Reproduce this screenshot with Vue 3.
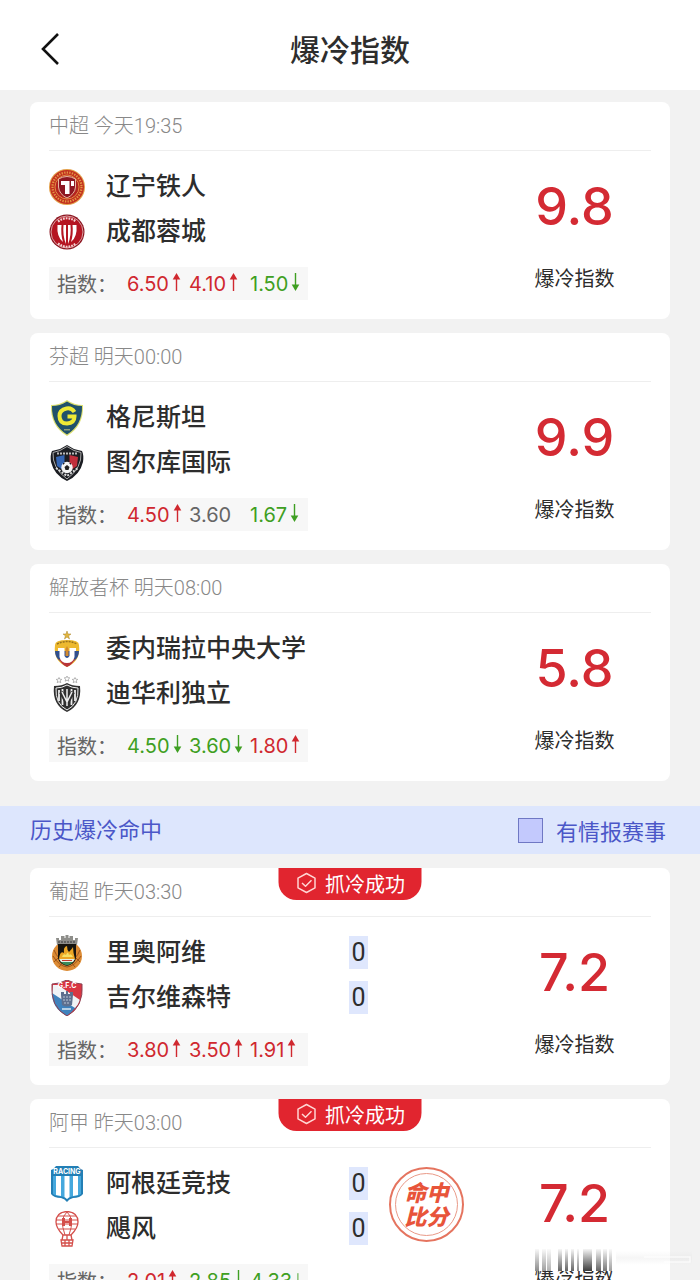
<template>
  <div class="page">
    <!-- Club crests, referenced by id from the match rows -->
    <svg class="crest-defs" aria-hidden="true">
      <symbol id="crest-liaoning" viewBox="0 0 36 36">
        <circle cx="18" cy="18" r="18" fill="#e3a04a" />
        <circle cx="18" cy="18" r="17" fill="#c2301f" />
        <circle cx="18" cy="18" r="14.500" fill="none" stroke="#e39a45" stroke-width="2.200" stroke-dasharray="1.300 1.300" />
        <circle cx="18" cy="18" r="12" fill="#b3231f" stroke="#e08a42" />
        <path d="M9.500 10 Q18 5 26.500 10 V18 Q26 25 18 29 Q10 25 9.500 18 Z" fill="#8d1722" stroke="#e6b9a4" stroke-width="1" />
        <path d="M12 12 H20.500 V25 H16 V16 H12 Z" fill="#fff" />
        <path d="M22 12 H25 V17 H22 Z" fill="#fff" />
      </symbol>
      <symbol id="crest-chengdu" viewBox="0 0 36 36">
        <circle cx="18" cy="18" r="17.500" fill="#8c1520" />
        <circle cx="18" cy="18" r="16" fill="#b51522" stroke="#d9a3a4" stroke-width="1" />
        <path d="M8.500 11 H12.500 Q11.500 20 14 28 Q7.500 23 8.500 11 Z M23.500 11 H27.500 Q28.500 23 22 28 Q24.500 20 23.500 11 Z" fill="#fff" />
        <path d="M14.500 11 H17 V30 Q13.500 22 14.500 11 Z M19 11 H21.500 Q22.500 22 19 30 Z" fill="#fff" />
        <path d="M9 7.500 Q18 1 27 7.500 M9 29.500 Q18 36 27 29.500" fill="none" stroke="#f3d3d3" stroke-width="2.200" stroke-dasharray="1.800 1" />
      </symbol>
      <symbol id="crest-gnistan" viewBox="0 0 36 36">
        <path d="M18 0 Q25 5 34 5 Q35 26 18 36 Q1 26 2 5 Q11 5 18 0 Z" fill="#dde070" />
        <path d="M18 1.500 Q25 6 33 6 Q33.500 25 18 34.500 Q2.500 25 3 6 Q11 6 18 1.500 Z" fill="#20516a" />
        <path d="M25.500 12 Q22.500 7.500 17.500 8.500 Q10.500 10 10.500 16 Q10.500 23.500 18 23.500 Q25.500 23 25.500 16.500 H18.500" fill="none" stroke="#eee936" stroke-width="4" />
        <rect x="15" y="29" width="6" height="1.500" fill="#8e9b77" />
      </symbol>
      <symbol id="crest-inter-turku" viewBox="0 0 36 36">
        <path d="M18 0 L25 4 L33 6 Q35 10 34 17 Q31 30 18 36 Q5 30 2 17 Q1 10 3 6 L11 4 Z" fill="#1b1d22" />
        <path d="M18 1.500 L25 5.500 L32 7.500 Q33 23 18 34 Q3 23 4 7.500 L11 5.500 Z" fill="none" stroke="#aaa" stroke-width="1" />
        <path d="M7 12 L15.500 10 V26 L8 21 Z" fill="#3566b4" />
        <path d="M29 12 L20.500 10 V26 L28 21 Z" fill="#c12e3b" />
        <path d="M8 8.500 H28" stroke="#bbb" stroke-width="2" stroke-dasharray="2 1" />
        <path d="M7 23 L18 31 L29 23" fill="none" stroke="#ddd" stroke-width="2" stroke-dasharray="2 1.500" />
        <circle cx="18" cy="22.500" r="5.700" fill="#f5f5f5" />
        <path d="M18 20 L20.500 22 L19.500 25 H16.500 L15.500 22 Z M14 18 L16 18 L14 20 Z M22 18 L20 18 L22 20 Z" fill="#222" />
      </symbol>
      <symbol id="crest-ucv" viewBox="0 0 36 36">
        <path d="M18 0 L19 3 L22 3 L19.600 4.800 L20.500 8 L18 6 L15.500 8 L16.400 4.800 L14 3 L17 3 Z" fill="#e2b53c" stroke="#a88325" stroke-width="0.500" />
        <path d="M6 14 Q6 9 18 9 Q30 9 30 14 Q32 30 18 36 Q4 30 6 14 Z" fill="#edb92f" />
        <path d="M6 20 L30 20 Q30 26 25 30 H11 Q6 26 6 20 Z" fill="#304f8e" />
        <path d="M10 28 H26 Q23 34 18 36 Q13 34 10 28 Z" fill="#b83439" />
        <path d="M8 13 Q18 8 28 13" fill="none" stroke="#96721f" stroke-width="1.500" stroke-dasharray="2 1" />
        <path d="M9 17 H15.500 V25 Q18 29 20.500 25 V17 H27 V20 H25.500 V26 Q24 32 18 32 Q12 32 10.500 26 V20 H9 Z" fill="#fff" />
        <path d="M18 15 L19.500 18 V25 H16.500 V18 Z" fill="#d38a2d" />
      </symbol>
      <symbol id="crest-independiente" viewBox="0 0 36 36">
        <path d="M10 1.500 l.8 1.700 2 .2 -1.500 1.300 .5 2 -1.800 -1 -1.800 1 .5 -2 -1.500 -1.300 2 -.2 Z M18 0 l.8 1.700 2 .2 -1.500 1.300 .5 2 -1.800 -1 -1.800 1 .5 -2 -1.500 -1.300 2 -.2 Z M26 1.500 l.8 1.700 2 .2 -1.500 1.300 .5 2 -1.800 -1 -1.800 1 .5 -2 -1.500 -1.300 2 -.2 Z" fill="#fff" stroke="#999" stroke-width="0.700" />
        <path d="M18 7 Q23 10 31 10 Q33 29 18 36 Q3 29 5 10 Q13 10 18 7 Z" fill="#303030" />
        <path d="M18 9 Q23 12 29 12 Q30 28 18 34 Q6 28 7 12 Q13 12 18 9 Z" fill="none" stroke="#eee" stroke-width="1" />
        <path d="M10 14 V25 M13.500 13 V29 M22.500 13 V29 M26 14 V25" stroke="#eee" stroke-width="1.800" />
        <path d="M12 16 L18 27 L24 16" fill="none" stroke="#303030" stroke-width="4" />
        <path d="M13 16 L18 26 L23 16 M18 13 V30" fill="none" stroke="#eee" stroke-width="1.500" />
      </symbol>
      <symbol id="crest-rioave" viewBox="0 0 36 36">
        <circle cx="18" cy="21" r="15" fill="#dc8b34" />
        <path d="M5 15 Q9 25 18 28 Q27 25 31 15 M4 21 Q10 31 18 32 Q26 31 32 21 M5 27 L10 22 M10 32 L15 26 M31 27 L26 22 M26 32 L21 26" fill="none" stroke="#9c541c" stroke-width="1" />
        <path d="M8 10 L7 3 H10 V5 H12 V1 H15.500 V3 H16.500 V0 H19.500 V3 H20.500 V1 H24 V5 H26 V3 H29 L28 10 Z" fill="#8e8e8a" />
        <path d="M9 7 H27" stroke="#555" stroke-width="1.500" stroke-dasharray="2 1" />
        <path d="M9 9 H27 V23 Q26 29 18 31 Q10 29 9 23 Z" fill="#17150f" />
        <path d="M10 24 Q11 15 15 18 Q14 12 18 11 Q18 15 20 17 Q23 14 24 12 Q24 17 26 24 Z" fill="#eba626" />
        <path d="M13 22 Q14 18 17 20 Q19 15 20 20 Q22 18 24 22 Z" fill="#f5e066" />
        <path d="M10 24 H26 L24 27 H12 Z" fill="#e8eee4" />
        <path d="M12 27 H24 Q22 30 18 30.500 Q14 30 12 27 Z" fill="#3c8b59" />
        <path d="M13 25.500 H23" stroke="#c53a2e" />
      </symbol>
      <symbol id="crest-gilvicente" viewBox="0 0 36 36">
        <path d="M18 0 Q26 4 33 4 Q35 27 18 36 Q1 27 3 4 Q10 4 18 0 Z" fill="#d93642" />
        <path d="M3 11 L27 27 Q23 32 18 36 Q2 28 3 11 Z" fill="#3f82bd" />
        <path d="M4 5 L9 5 L31 20 Q29 25 26 28 L3 13 Z" fill="#f0f3f6" />
        <path d="M12 15 V12 H15 V14 H17 V11 H19 V14 H21 V12 H24 V15 L23 25 Q18 28 13 25 Z" fill="#5d6f8e" />
        <path d="M14 17 H22 M14 20 H22 M15 23 H21" stroke="#bac6d6" stroke-width="1" stroke-dasharray="2 1" />
        <path d="M13 29 H22" stroke="#dce7f2" stroke-width="1.500" />
        <path d="M18 0 Q26 4 33 4 Q35 27 18 36 Q1 27 3 4 Q10 4 18 0 Z" fill="none" stroke="#8a4254" stroke-width="1" />
      </symbol>
      <symbol id="crest-racing" viewBox="0 0 36 36">
        <path d="M7 0 H29 Q31 3 34 4 V28 Q31 32 24 32 Q20 33 18 36 Q16 33 12 32 Q5 32 2 28 V4 Q5 3 7 0 Z" fill="#237fb5" />
        <path d="M4 10 H32 V28 Q29 30 23 30.500 Q20 31 18 33 Q16 31 13 30.500 Q7 30 4 28 Z" fill="#45a8dd" />
        <path d="M7 10 H12 V30 L7 29 Z M15.500 10 H20.500 V31 L18 33 L15.500 31 Z M24 10 H29 V29 L24 30 Z" fill="#fff" />
      </symbol>
      <symbol id="crest-huracan" viewBox="0 0 36 36">
        <g fill="none" stroke="#d44f4b" stroke-width="1.300">
          <path d="M18 0.500 Q29 1 29 11 Q29 17 22 24 H14 Q7 17 7 11 Q7 1 18 0.500 Z" fill="#fff" />
          <path d="M18 1 Q10 8 16 24 M18 1 Q26 8 20 24 M7 9 L29 9 M7 13 H29 M10 18 H26 M9 5 L27 5" stroke-width="1" />
          <path d="M14 24 L13 29 M22 24 L23 29 M18 24 V29 M12 29 H24 L23 35 H13 Z M13 32 H23 M16 29 V35 M20 29 V35" />
        </g>
        <path d="M13 7 H16 V10 H20 V7 H23 V15 H20 V12 H16 V15 H13 Z" fill="#d44f4b" />
      </symbol>
    </svg>

    <header class="navbar">
      <button class="back" type="button" aria-label="返回">
        <svg width="20" height="34" viewBox="0 0 20 34">
          <path d="M18 2 L3 17 L18 32" fill="none" stroke="#111" stroke-width="2.600" />
        </svg>
      </button>
      <h1 class="title">爆冷指数</h1>
    </header>

    <main>
      <template v-for="section in sections" :key="section.key">
        <div v-if="section.title" class="section-bar">
          <h2 class="section-title">{{ section.title }}</h2>
          <label class="filter" for="intel-only">
            <input id="intel-only" v-model="intelOnly" type="checkbox" />
            <span>有情报赛事</span>
          </label>
        </div>

        <div class="match-list">
          <article v-for="match in section.matches" :key="match.id" class="card">
            <div v-if="match.caught" class="ribbon">
              <svg width="22" height="22" viewBox="0 0 22 22" fill="none" stroke="#ffd5d3" stroke-width="1.500" stroke-linejoin="round">
                <path d="M11 1.500 L19.500 6.200 V15.800 L11 20.500 L2.500 15.800 V6.200 Z" />
                <path d="M6.500 11 L10 14.300 L16 8.300" />
              </svg>
              <span>抓冷成功</span>
            </div>

            <div class="meta">{{ match.league }} {{ match.time }}</div>

            <div class="body">
              <div class="info">
                <div class="versus">
                  <div class="teams">
                    <div v-for="team in match.teams" :key="team.name" class="team">
                      <svg class="crest" viewBox="0 0 36 36" aria-hidden="true">
                        <use :href="'#crest-' + team.crest" width="36" height="36" />
                        <text v-if="team.initials" x="18" y="8" class="crest-text">{{ team.initials }}</text>
                      </svg>
                      <span class="name">{{ team.name }}</span>
                      <span v-if="team.goals !== undefined" class="goals">{{ team.goals }}</span>
                    </div>
                  </div>
                  <div v-if="match.exact" class="stamp">
                    <span>命中</span>
                    <span>比分</span>
                  </div>
                </div>

                <div class="odds">
                  <span class="odds-label">指数：</span>
                  <span v-for="(odd, i) in match.odds" :key="i" class="odd" :class="odd.trend">
                    {{ odd.value }}
                    <svg v-if="odd.trend" class="arrow" width="9" height="20" viewBox="0 0 9 20">
                      <path d="M4.500 5 V19" stroke="currentColor" stroke-width="1.400" />
                      <path d="M4.500 1 L8.300 7.500 H0.700 Z" fill="currentColor" />
                    </svg>
                  </span>
                </div>
              </div>

              <div class="index">
                <strong class="index-value">{{ match.index }}</strong>
                <span class="index-label">爆冷指数</span>
                <svg v-if="match.streaked" class="streaks" viewBox="0 0 170 27" aria-hidden="true">
                  <defs>
                    <linearGradient id="streak" x1="0" y1="0" x2="0" y2="1">
                      <stop offset="0" stop-color="#333" stop-opacity="0.050" />
                      <stop offset="0.500" stop-color="#333" stop-opacity="0.500" />
                      <stop offset="1" stop-color="#333" stop-opacity="0.950" />
                    </linearGradient>
                    <linearGradient id="haze" x1="0" y1="0" x2="0" y2="1">
                      <stop offset="0" stop-color="#ddd" stop-opacity="0" />
                      <stop offset="0.500" stop-color="#ddd" stop-opacity="0.700" />
                      <stop offset="1" stop-color="#ddd" stop-opacity="0" />
                    </linearGradient>
                  </defs>
                  <rect width="82" height="22" fill="#fff" />
                  <rect
                    v-for="bar in streaks"
                    :key="bar.x"
                    :x="bar.x"
                    y="0"
                    :width="bar.w"
                    height="22"
                    fill="url(#streak)"
                    :opacity="bar.o"
                  />
                  <rect x="82" y="2" width="76" height="14" fill="url(#haze)" opacity="0.400" />
                  <path d="M110 8 H156 V13 H130" fill="none" stroke="#fff" stroke-width="1.500" opacity="0.700" />
                </svg>
              </div>
            </div>
          </article>
        </div>
      </template>
    </main>
  </div>
</template>

<script setup>
import { ref } from "vue";

const intelOnly = ref(false);

const up = (value) => ({ value, trend: "up" });
const down = (value) => ({ value, trend: "down" });
const flat = (value) => ({ value, trend: "" });

const sections = [
  {
    key: "upcoming",
    matches: [
      {
        id: 1,
        league: "中超",
        time: "今天19:35",
        teams: [
          { name: "辽宁铁人", crest: "liaoning" },
          { name: "成都蓉城", crest: "chengdu" },
        ],
        odds: [up("6.50"), up("4.10"), down("1.50")],
        index: "9.8",
      },
      {
        id: 2,
        league: "芬超",
        time: "明天00:00",
        teams: [
          { name: "格尼斯坦", crest: "gnistan" },
          { name: "图尔库国际", crest: "inter-turku" },
        ],
        odds: [up("4.50"), flat("3.60"), down("1.67")],
        index: "9.9",
      },
      {
        id: 3,
        league: "解放者杯",
        time: "明天08:00",
        teams: [
          { name: "委内瑞拉中央大学", crest: "ucv" },
          { name: "迪华利独立", crest: "independiente" },
        ],
        odds: [down("4.50"), down("3.60"), up("1.80")],
        index: "5.8",
      },
    ],
  },
  {
    key: "history",
    title: "历史爆冷命中",
    matches: [
      {
        id: 4,
        league: "葡超",
        time: "昨天03:30",
        caught: true,
        teams: [
          { name: "里奥阿维", crest: "rioave", goals: 0 },
          { name: "吉尔维森特", crest: "gilvicente", initials: "G.F.C", goals: 0 },
        ],
        odds: [up("3.80"), up("3.50"), up("1.91")],
        index: "7.2",
      },
      {
        id: 5,
        league: "阿甲",
        time: "昨天03:00",
        caught: true,
        exact: true,
        streaked: true,
        teams: [
          { name: "阿根廷竞技", crest: "racing", initials: "RACING", goals: 0 },
          { name: "飓风", crest: "huracan", goals: 0 },
        ],
        odds: [up("2.01"), down("2.85"), down("4.33")],
        index: "7.2",
      },
    ],
  },
];

const streaks = [
  { x: 1, w: 4, o: 0.6 },
  { x: 8, w: 4, o: 0.5 },
  { x: 13, w: 4, o: 0.4 },
  { x: 24, w: 4, o: 0.8 },
  { x: 31, w: 3, o: 0.8 },
  { x: 37, w: 3, o: 0.8 },
  { x: 43, w: 2, o: 0.6 },
  { x: 49, w: 9, o: 1 },
  { x: 62, w: 5, o: 0.8 },
  { x: 69, w: 4, o: 0.7 },
  { x: 75, w: 3, o: 0.5 },
];
</script>

<style>
body {
  background: #f2f2f2;
}
</style>

<style scoped>
.page {
  min-height: 100vh;
  background: #f2f2f2;
  color: #2d2d2d;
  font-family: Inter, "Noto Sans CJK SC", sans-serif;
  font-size: 20px;
}

.crest-defs {
  position: absolute;
  width: 0;
  height: 0;
}

.crest-text {
  fill: #fff;
  font-size: 7px;
  font-weight: 700;
  text-anchor: middle;
}

/* Top bar */
.navbar {
  display: grid;
  grid-template-columns: 100px 1fr 100px;
  align-items: center;
  height: 90px;
  padding-top: 10px;
  box-sizing: border-box;
  background: #fff;
}

.back {
  justify-self: start;
  display: flex;
  margin-left: 32px;
  padding: 0 8px 2px;
  border: 0;
  background: none;
  cursor: pointer;
}

.title {
  margin: 0;
  font-size: 30px;
  line-height: 40px;
  font-weight: 500;
  text-align: center;
}

/* Match cards */
main {
  padding: 12px 0 14px;
}

.match-list {
  display: flex;
  flex-direction: column;
  gap: 14px;
  padding: 0 30px;
}

.card {
  position: relative;
  padding: 0 19px 19px;
  border-radius: 8px;
  background: #fff;
}

.meta {
  height: 48px;
  border-bottom: 1px solid #eee;
  color: #888;
  font-family: Roboto, "Noto Sans CJK SC", sans-serif;
  line-height: 48px;
  font-weight: 300;
}

.ribbon {
  position: absolute;
  top: 0;
  left: 50%;
  display: flex;
  align-items: center;
  justify-content: center;
  gap: 8px;
  width: 143px;
  height: 32px;
  padding-bottom: 2px;
  box-sizing: border-box;
  transform: translateX(-50%);
  border-radius: 0 0 18px 18px;
  background: #e1252f;
  color: #fff;
}

.body {
  display: flex;
  justify-content: space-between;
  padding-top: 13px;
}

.versus {
  display: flex;
  align-items: flex-start;
  gap: 21px;
}

.teams {
  width: 319px;
}

.team {
  display: flex;
  align-items: center;
  height: 45px;
}

.crest {
  width: 36px;
  height: 36px;
  margin-right: 21px;
}

.name {
  flex: 1;
  padding-bottom: 2px;
  font-size: 25px;
  line-height: 36px;
  font-weight: 500;
}

.goals {
  width: 19px;
  background: #dfe7fd;
  font-family: Roboto, sans-serif;
  font-size: 25px;
  line-height: 33px;
  text-align: center;
}

.stamp {
  display: flex;
  flex-direction: column;
  align-items: center;
  justify-content: center;
  width: 75px;
  height: 75px;
  margin-top: 6px;
  box-sizing: border-box;
  border: 2px solid #e5745f;
  border-radius: 50%;
  outline: 1px solid #e99a88;
  outline-offset: -7px;
  color: #e8543a;
  font-size: 22px;
  line-height: 24px;
  font-weight: 900;
  font-style: italic;
}

.odds {
  display: inline-grid;
  grid-template-columns: 70px 62px 61px 51px;
  align-items: center;
  height: 33px;
  margin-top: 13px;
  padding: 0 7px 0 8px;
  background: #f7f7f7;
}

.odds-label {
  color: #666;
}

.odd {
  display: flex;
  align-items: flex-start;
  gap: 3px;
  color: #666;
  line-height: 24px;
}

.odd.up {
  color: #d0282f;
}

.odd.down {
  color: #3f9f22;
}

.odd.down .arrow {
  transform: rotate(180deg);
}

.index {
  position: relative;
  display: flex;
  flex-direction: column;
  align-items: center;
  width: 153px;
  padding-top: 13px;
}

.index-value {
  color: #d42a33;
  font-size: 52px;
  line-height: 60px;
  font-weight: 500;
}

.index-label {
  margin-top: 30px;
  line-height: 24px;
}

/* Smear lying over the label */
.streaks {
  position: absolute;
  top: 88px;
  left: 36px;
  width: 170px;
  height: 27px;
}

/* History heading */
.section-bar {
  display: flex;
  align-items: center;
  justify-content: space-between;
  height: 48px;
  margin: 25px 0 14px;
  padding: 0 34px 0 30px;
  background: #dde6fd;
  color: #4b57c8;
}

.section-title {
  margin: 0;
  padding-bottom: 4px;
  font-size: 22px;
  font-weight: 400;
}

.filter {
  display: flex;
  align-items: center;
  gap: 13px;
  font-size: 22px;
}

.filter input {
  width: 25px;
  height: 25px;
  margin: 0;
  appearance: none;
  border: 1px solid #6f78c4;
  background: #c3c9fd;
}

.filter input:checked {
  background: #4b57c8;
}
</style>
